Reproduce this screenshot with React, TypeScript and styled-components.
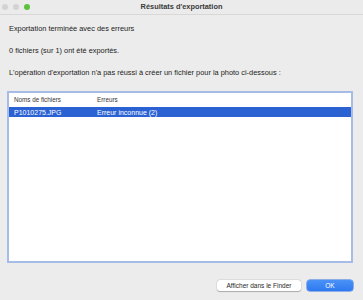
import styled, { createGlobalStyle } from 'styled-components';

const GlobalStyle = createGlobalStyle`
  html, body {
    margin: 0;
    padding: 0;
    background: #ececec;
  }
  * {
    box-sizing: border-box;
  }
`;

const Window = styled.div`
  width: 363px;
  height: 300px;
  background: #ececec;
  font-family: 'Liberation Sans', Arial, sans-serif;
  color: #262626;
  display: flex;
  flex-direction: column;
  overflow: hidden;
`;

const TitleBar = styled.div`
  height: 15px;
  border-bottom: 1px solid #d8d8d8;
  background: #ebebeb;
  display: flex;
  align-items: center;
`;

const Lights = styled.div`
  display: flex;
  gap: 3px;
  padding-left: 2px;
  align-items: center;
`;

const Light = styled.span<{ $color: string }>`
  width: 6px;
  height: 6px;
  border-radius: 50%;
  background: ${(p) => p.$color};
  margin-right: 2px;
`;

const Title = styled.div`
  flex: 1;
  text-align: center;
  font-size: 7.4px;
  font-weight: bold;
  color: #3a3a3a;
  margin-right: 32px;
  margin-top: -1px;
`;

const Content = styled.div`
  flex: 1;
  display: flex;
  flex-direction: column;
  padding: 9px 10px 0 7px;
`;

const Message = styled.p`
  margin: 0 0 13px 2px;
  font-size: 7.4px;
  line-height: 9px;
  color: #222222;
`;

const TableBox = styled.div`
  margin-top: 1px;
  height: 172px;
  background: #ffffff;
  border: 2px solid #a7bbe7;
  display: flex;
  flex-direction: column;
`;

const Row = styled.div<{ $selected?: boolean }>`
  display: grid;
  grid-template-columns: 83px 1fr;
  align-items: center;
  padding-left: 5px;
  background: ${(p) => (p.$selected ? '#2a62d4' : '#ffffff')};
  color: ${(p) => (p.$selected ? '#ffffff' : '#333333')};
`;

const HeaderRow = styled(Row)`
  height: 12px;
  font-size: 6.3px;
  margin-bottom: 2px;
`;

const DataRow = styled(Row)`
  height: 10px;
  font-size: 7px;
`;

const Footer = styled.div`
  display: flex;
  justify-content: flex-end;
  gap: 6px;
  margin-top: 17px;
`;

const Button = styled.button<{ $primary?: boolean }>`
  height: 11px;
  padding: 0;
  border: none;
  border-radius: 3px;
  font-family: inherit;
  font-size: 6.5px;
  line-height: 11px;
  text-align: center;
  width: ${(p) => (p.$primary ? '46px' : '84px')};
  background: ${(p) => (p.$primary ? 'linear-gradient(#4b92f7, #2f79f0)' : '#ffffff')};
  color: ${(p) => (p.$primary ? '#ffffff' : '#262626')};
  box-shadow: ${(p) =>
    p.$primary ? '0 0 0 0.5px #2c6fe0' : '0 0.5px 1px rgba(0,0,0,0.25), 0 0 0 0.5px rgba(0,0,0,0.08)'};
`;

export default function App() {
  return (
    <>
      <GlobalStyle />
      <Window>
        <TitleBar>
          <Lights>
            <Light $color="#d3d3d3" />
            <Light $color="#d3d3d3" />
            <Light $color="#5bc23e" />
          </Lights>
          <Title>Résultats d'exportation</Title>
        </TitleBar>
        <Content>
          <Message>Exportation terminée avec des erreurs</Message>
          <Message>0 fichiers (sur 1) ont été exportés.</Message>
          <Message>L'opération d'exportation n'a pas réussi à créer un fichier pour la photo ci-dessous :</Message>
          <TableBox>
            <HeaderRow>
              <span>Noms de fichiers</span>
              <span>Erreurs</span>
            </HeaderRow>
            <DataRow $selected>
              <span>P1010275.JPG</span>
              <span>Erreur inconnue (2)</span>
            </DataRow>
          </TableBox>
          <Footer>
            <Button>Afficher dans le Finder</Button>
            <Button $primary>OK</Button>
          </Footer>
        </Content>
      </Window>
    </>
  );
}
